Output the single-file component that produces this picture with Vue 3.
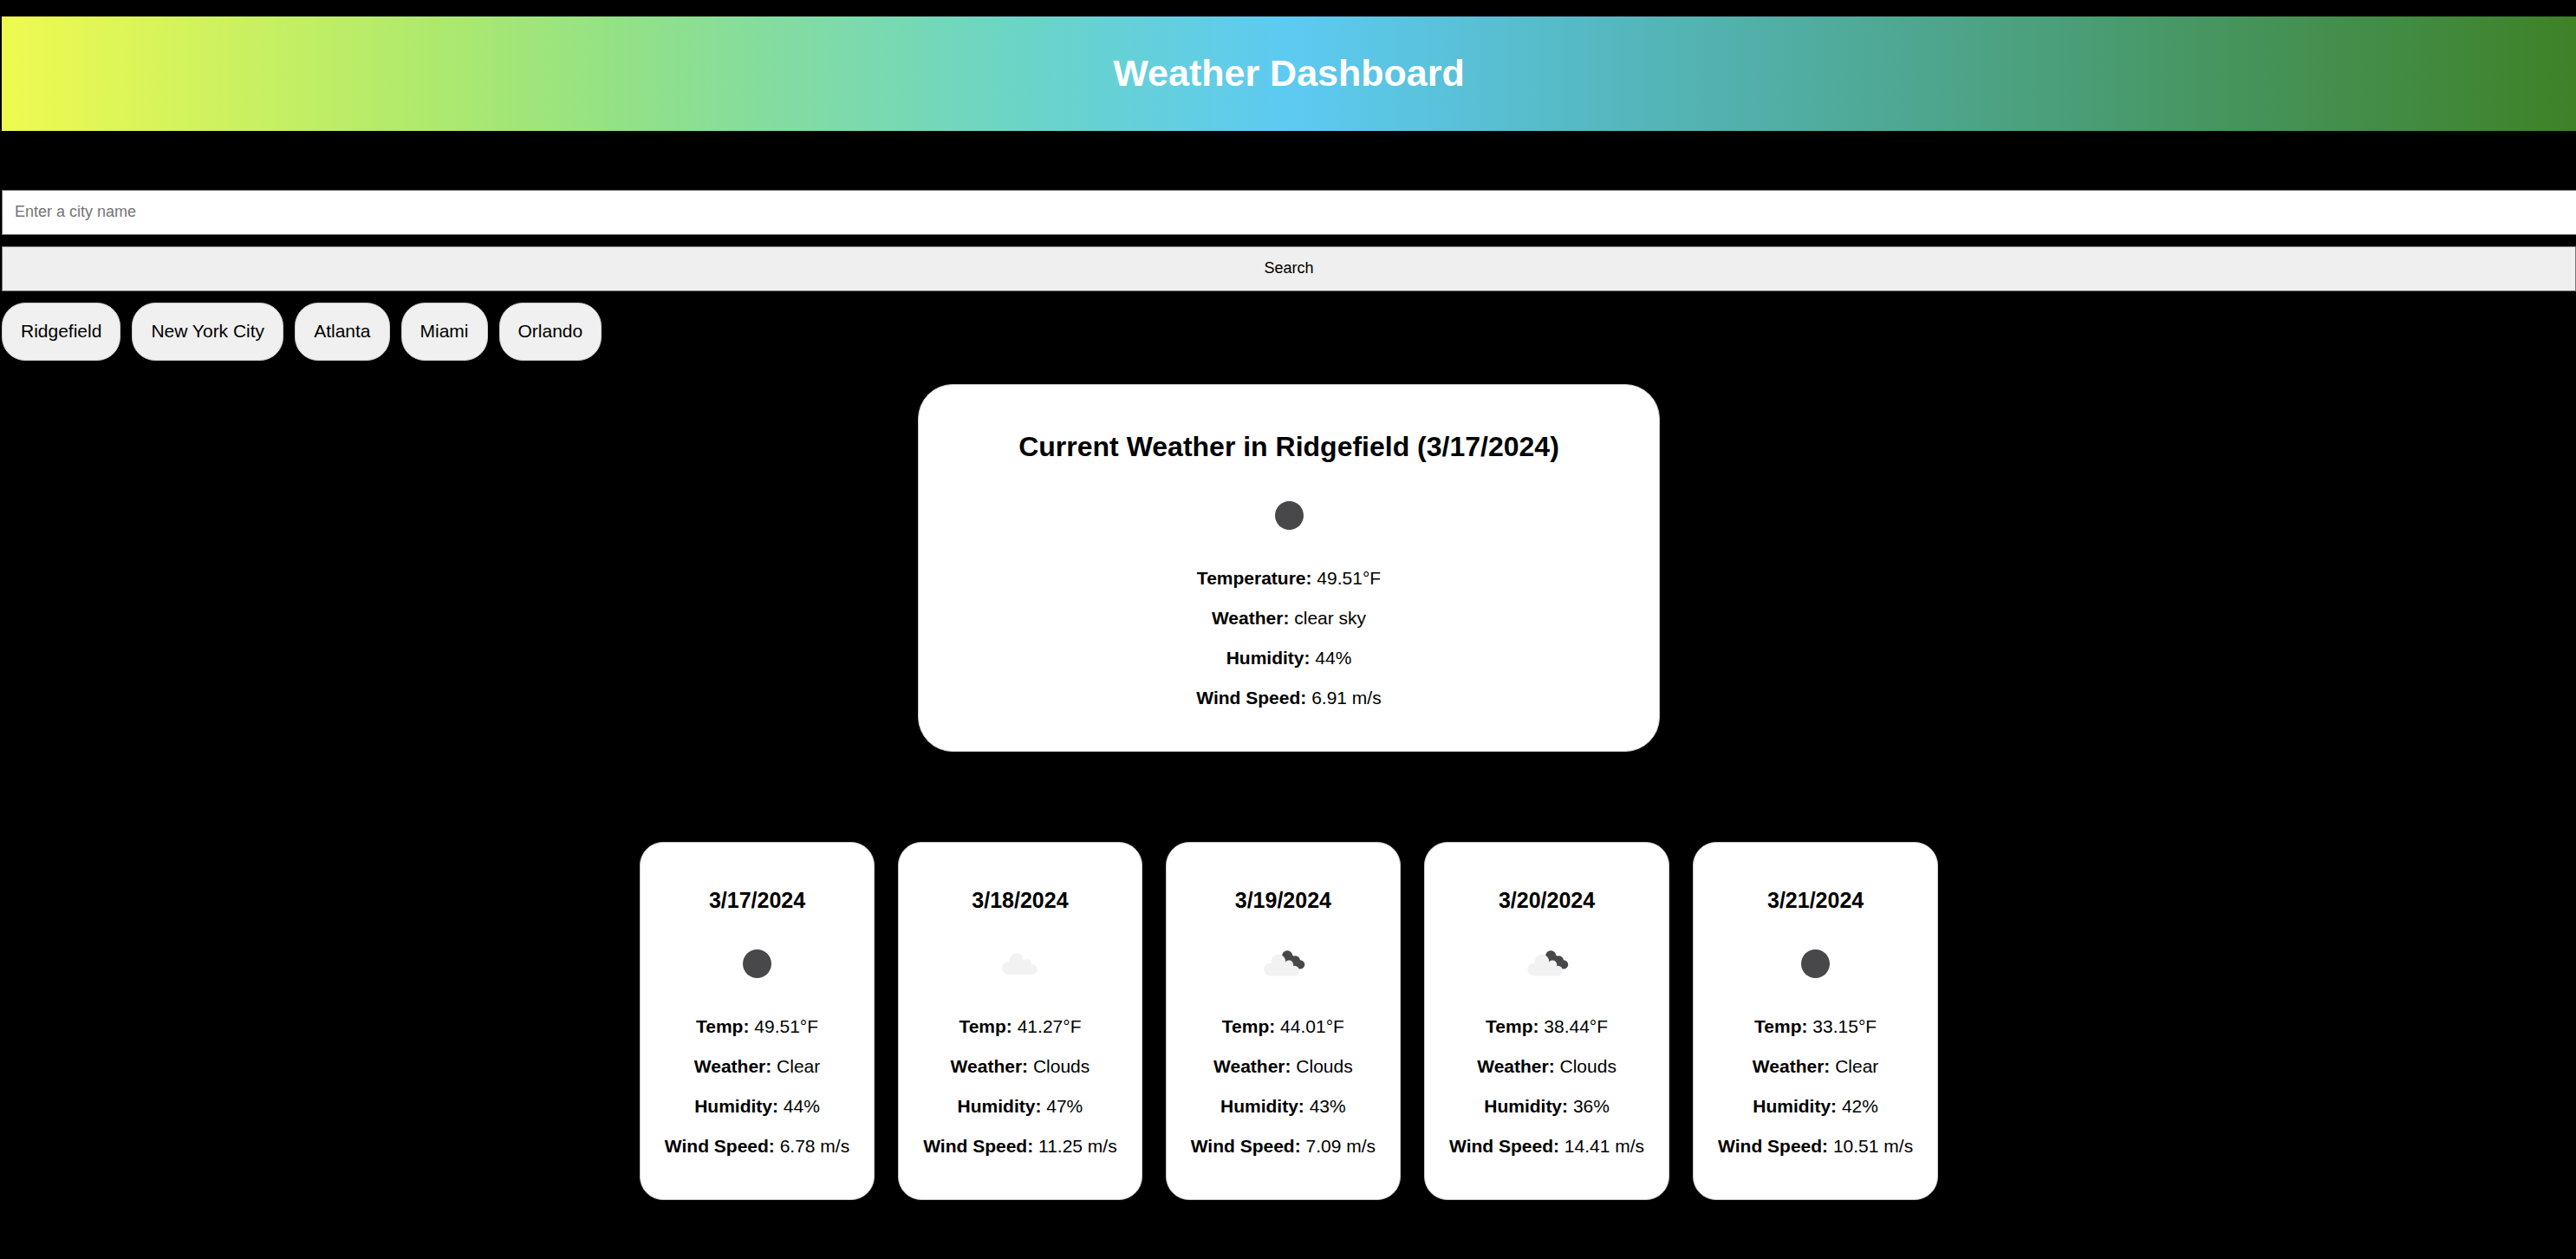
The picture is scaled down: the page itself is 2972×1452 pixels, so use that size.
<script setup>
import { ref } from 'vue'

const city = ref('')
const history = ['Ridgefield', 'New York City', 'Atlanta', 'Miami', 'Orlando']

const current = {
  title: 'Current Weather in Ridgefield (3/17/2024)',
  rows: [
    ['Temperature', '49.51°F'],
    ['Weather', 'clear sky'],
    ['Humidity', '44%'],
    ['Wind Speed', '6.91 m/s'],
  ],
}

const forecast = [
  { date: '3/17/2024', icon: 'clear', temp: '49.51°F', weather: 'Clear', humidity: '44%', wind: '6.78 m/s' },
  { date: '3/18/2024', icon: 'cloud', temp: '41.27°F', weather: 'Clouds', humidity: '47%', wind: '11.25 m/s' },
  { date: '3/19/2024', icon: 'broken', temp: '44.01°F', weather: 'Clouds', humidity: '43%', wind: '7.09 m/s' },
  { date: '3/20/2024', icon: 'broken', temp: '38.44°F', weather: 'Clouds', humidity: '36%', wind: '14.41 m/s' },
  { date: '3/21/2024', icon: 'clear', temp: '33.15°F', weather: 'Clear', humidity: '42%', wind: '10.51 m/s' },
]
</script>

<template>
  <div class="page">
    <header class="banner">
      <h1>Weather Dashboard</h1>
    </header>

    <form class="search" @submit.prevent>
      <input v-model="city" class="field" type="text" placeholder="Enter a city name" aria-label="City name" />
      <button class="submit" type="submit">Search</button>
    </form>

    <nav class="history" aria-label="Search history">
      <button v-for="name in history" :key="name" class="chip" type="button">{{ name }}</button>
    </nav>

    <main>
      <section class="card current">
        <h2>{{ current.title }}</h2>
        <svg class="icon" viewBox="0 0 67 67" aria-hidden="true">
          <circle cx="33.5" cy="33.5" r="16.5" fill="#48484a" />
        </svg>
        <p v-for="[label, value] in current.rows" :key="label"><strong>{{ label }}:</strong> {{ value }}</p>
      </section>

      <section class="forecast">
        <article v-for="day in forecast" :key="day.date" class="card day">
          <h3>{{ day.date }}</h3>
          <svg class="icon" viewBox="0 0 67 67" aria-hidden="true">
            <circle v-if="day.icon === 'clear'" cx="33.5" cy="33.5" r="16.5" fill="#48484a" />
            <template v-else>
              <g v-if="day.icon === 'broken'" fill="#48484a">
                <circle cx="38.2" cy="24.3" r="6" />
                <circle cx="47.6" cy="29.7" r="5.4" />
                <circle cx="53" cy="34.4" r="5.2" />
                <path d="M32.4 24 L38 36 L52 39.4 L53 31 L40 20 Z" />
              </g>
              <g fill="#f2f2f2" :transform="day.icon === 'broken' ? 'translate(-1.8 1.5)' : undefined">
                <circle cx="29.8" cy="29.5" r="8.3" />
                <circle cx="20.4" cy="38.6" r="7.4" />
                <circle cx="42" cy="33" r="5" />
                <circle cx="48" cy="40.1" r="5.9" />
                <path d="M20.4 46 V34 L30 29 L42 32 L48 38 V46 Z" />
              </g>
            </template>
          </svg>
          <p><strong>Temp:</strong> {{ day.temp }}</p>
          <p><strong>Weather:</strong> {{ day.weather }}</p>
          <p><strong>Humidity:</strong> {{ day.humidity }}</p>
          <p><strong>Wind Speed:</strong> {{ day.wind }}</p>
        </article>
      </section>
    </main>
  </div>
</template>

<style>
body {
  background: #000;
}
</style>

<style scoped>
.page {
  padding: 19px 0 67px 2px;
  overflow: hidden;
  font-family: Arial, "Liberation Sans", sans-serif;
  font-size: 21px;
  line-height: 25px;
  color: #000;
}

.page *,
.page {
  box-sizing: border-box;
}

h1,
h2,
h3,
p {
  margin: 0;
}

.banner {
  display: flex;
  align-items: center;
  justify-content: center;
  padding: 40px 0 42px;
  background: linear-gradient(to right, #effa50, #ade96e 17%, #93e187 24%, #6ad4c8 40%, #5dcaf2 50%, #3e8127);
  color: #fff;
}

h1 {
  font-size: 43px;
  line-height: 50px;
}

.search {
  display: flex;
  flex-direction: column;
  gap: 13px;
  margin-top: 68px;
}

.field,
.submit {
  height: 52px;
  padding: 0 14px 2px;
  border: 1px solid #767676;
  border-radius: 0;
  font-family: inherit;
  font-size: 18px;
  color: #000;
}

.field {
  width: calc(100% + 2px);
  background: #fff;
}

.field::placeholder {
  color: #757575;
}

.submit {
  background: #efefef;
}

.history {
  display: flex;
  flex-wrap: wrap;
  gap: 13px;
  margin-top: 13px;
}

.chip {
  padding: 19px 21px 21px;
  border: 1px solid #ccc;
  border-radius: 27px;
  background: #f0f0f0;
  font: inherit;
  color: #000;
}

.card {
  padding: 27px 28px 28px;
  border: 1px solid #ccc;
  background: #fff;
  text-align: center;
}

.current {
  max-width: 856px;
  margin: 27px auto 0;
  border-radius: 40px;
}

.forecast {
  display: flex;
  flex-wrap: wrap;
  justify-content: center;
  gap: 27px;
  margin-top: 104px;
}

.day {
  border-radius: 27px;
}

h2 {
  margin: 26px 0 27px;
  font-size: 32px;
  line-height: 37px;
}

h3 {
  margin: 25px 0;
  font-size: 25px;
  line-height: 29px;
}

.icon {
  display: block;
  width: 67px;
  height: 67px;
  margin: 0 auto 26px;
}

p {
  margin-bottom: 21px;
}
</style>
